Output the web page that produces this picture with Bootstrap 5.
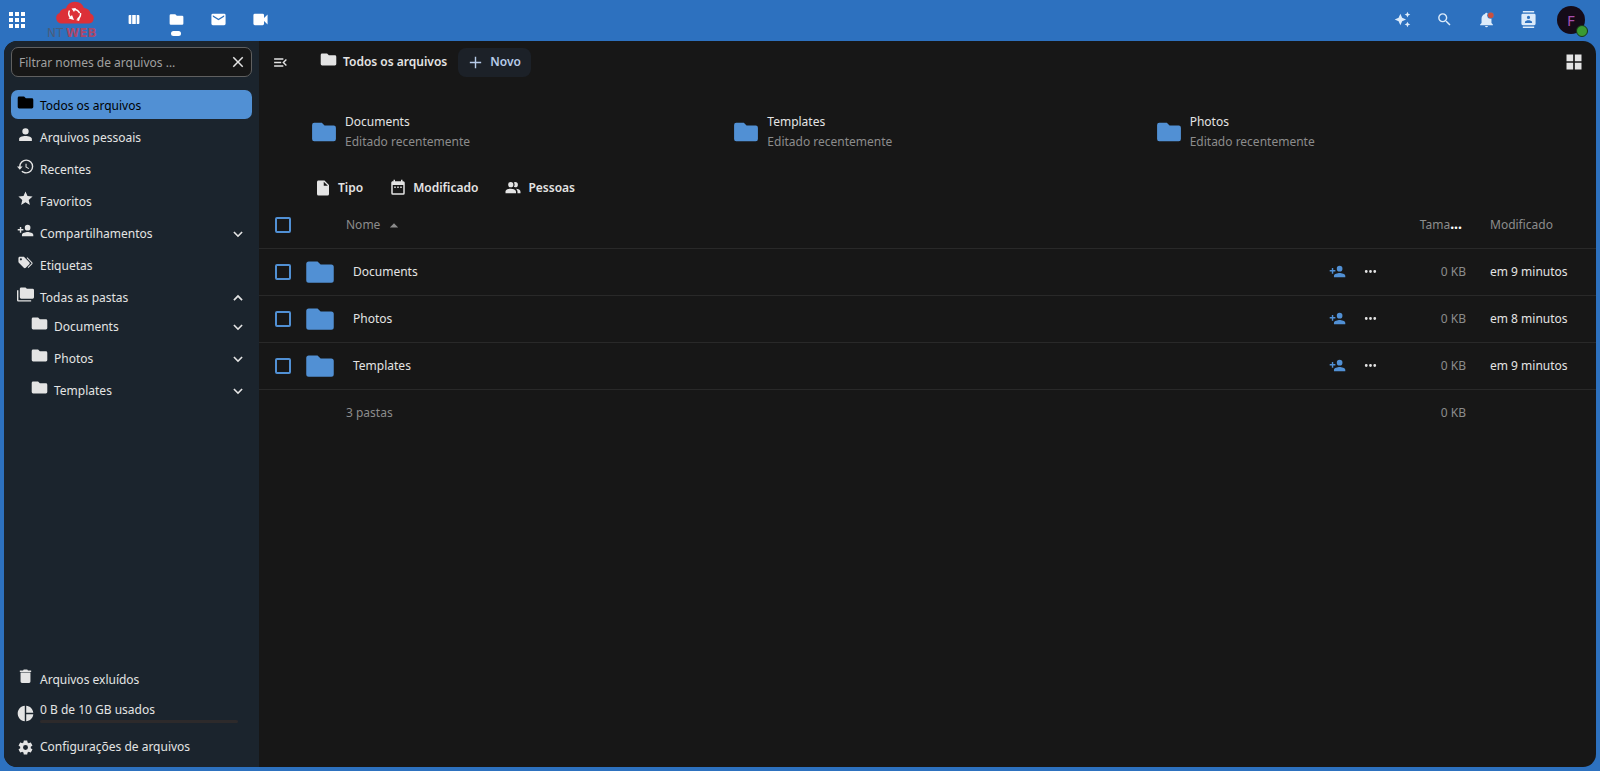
<!DOCTYPE html>
<html lang="pt-BR">
<head>
<meta charset="utf-8">
<meta name="viewport" content="width=device-width, initial-scale=1">
<title>Todos os arquivos</title>
<link href="https://cdn.jsdelivr.net/npm/bootstrap@5.3.0/dist/css/bootstrap.min.css" rel="stylesheet">
<style>
:root{--brand:#2d71bf;--accent:#5190d4;--side:#1b242d;--panel:#171717;--ink:#e4e4e4;--dim:#8c8c8c;--line:#292929}
body{background:var(--brand);color:var(--ink);font-family:"Noto Sans",sans-serif;font-size:12px;line-height:20px}
svg{fill:currentColor;display:block;flex:none}
a{color:inherit;text-decoration:none}
button{color:inherit;background:none;border:0;padding:0;font-weight:inherit}
.ic14{width:14px;height:14px}
.ic17{width:17px;height:17px}
.ic18{width:18px;height:18px}
.ic26{width:26px;height:26px}
.ic30{width:30px;height:30px}
.topbar{height:41px;padding:0 15px 2px 8px;color:#fff}
.brand-link{margin:0 9px 0 20px}
.brand-link text{font-family:"DejaVu Sans",sans-serif;font-size:12px}
.app-link,.tool{width:42px;height:39px;position:relative}
.app-link.current::after{content:"";position:absolute;bottom:3px;left:16px;width:10px;height:5px;border-radius:3px;background:#fff}
.tool{color:#dcebfa}
.avatar{width:28px;height:28px;border-radius:50%;background:#150b18;color:#a74fb0;font-size:15px;position:relative;margin-left:8px}
.status{position:absolute;right:-3px;bottom:-3px;width:12px;height:12px;border-radius:50%;background:#3a9a33;border:1px solid #17351a}
.shell{margin:0 4px 4px;border-radius:13px;overflow:hidden;background:var(--panel)}
.side{width:255px;background:var(--side);padding:6px 7px 6px}
.filter{border:1px solid #606060;border-radius:7px;background:var(--panel);height:30px;margin-bottom:13px;padding:0 4px 0 7px}
.filter input{background:none;border:0;outline:0;color:var(--ink);min-width:0;padding:2px 0 0}
.filter input::placeholder{color:#a0a0a0;opacity:1}
.entries{gap:3px}
.entry{height:29px;border-radius:7px;padding:1px 7px 0 6px}
.entry>.ic17{margin:0 6px 0 0}
.entry.raised{padding-top:3px}
.entry.raised>.ic17{margin-bottom:8px}
.entry.current{background:var(--accent);color:#000}
.sub{padding-left:14px}
.quota{height:3px;width:198px;border-radius:2px;background:#2d2a2b}
.quota-row{height:33px}
.quota-row>span{padding-bottom:3px}
.main-head{height:42px;padding:0 12px 0 13px}
.crumb{margin:0 11px 0 31px;font-weight:600}
.crumb svg{margin:0 6px 5px 0}
.new-btn{height:29px;padding:0 10px 0 9px;border-radius:8px;background:#1c2128;color:#b7cbe8;font-weight:600;gap:6px}
.recent{padding:29px 18px 0 52px}
.recent a{gap:8px}
.filters{padding:26px 0 0 55px;gap:26px;font-weight:600}
.filters button{gap:6px}
.dim{color:var(--dim)}
.acc{color:var(--accent)}
.files{width:100%;table-layout:fixed;margin-top:4px}
.files th{font-weight:400;color:var(--dim)}
.files th,.files td{height:47px;padding:0;border-bottom:1px solid var(--line)}
.files th{height:46px}
.files tfoot td{border:0;height:48px}
.files td a{gap:18px}
.files .form-check-input{width:16px;height:16px;margin:0 0 0 16px;border:2px solid var(--accent);border-radius:2px;background:none;float:none;display:block}
.c-check{width:46px}.c-act{width:59px}.c-size{width:102px}.c-time{width:106px}
.files .size{padding-right:24px;text-align:right}
.files th.size{padding-right:28px}
.files .size b{font-size:14px}
.files .name-pad{padding-left:41px}
</style>
<script src="https://cdn.jsdelivr.net/npm/bootstrap@5.3.0/dist/js/bootstrap.bundle.min.js"></script>
</head>
<body class="d-flex flex-column min-vh-100">
<svg class="d-none">
<symbol id="folder" viewBox="0 0 24 24"><path d="M10 3.500H3a2 2 0 0 0-2 2v13a2 2 0 0 0 2 2h18a2 2 0 0 0 2-2V8a2 2 0 0 0-2-2h-8.500z"/></symbol>
<symbol id="down" viewBox="0 0 24 24"><path d="M6 7.500 12 13.500l6-6L20 9.500l-8 8-8-8z"/></symbol>
<symbol id="up" viewBox="0 0 24 24"><path d="M6 16.500 12 10.500l6 6L20 14.500l-8-8-8 8z"/></symbol>
<symbol id="plususer" viewBox="0 0 24 24"><path d="M15,14C12.33,14 7,15.33 7,18V20H23V18C23,15.33 17.67,14 15,14M6,10V7H4V10H1V12H4V15H6V12H9V10M15,12A4,4 0 0,0 19,8A4,4 0 0,0 15,4A4,4 0 0,0 11,8A4,4 0 0,0 15,12Z"/></symbol>
<symbol id="dots" viewBox="0 0 24 24"><path d="M16,12A2,2 0 0,1 18,10A2,2 0 0,1 20,12A2,2 0 0,1 18,14A2,2 0 0,1 16,12M10,12A2,2 0 0,1 12,10A2,2 0 0,1 14,12A2,2 0 0,1 12,14A2,2 0 0,1 10,12M4,12A2,2 0 0,1 6,10A2,2 0 0,1 8,12A2,2 0 0,1 6,14A2,2 0 0,1 4,12Z"/></symbol>
</svg>

<header class="topbar d-flex align-items-center">
  <button aria-label="Aplicativos"><svg class="ic18" viewBox="0 0 18 18"><path d="M1 1h4v4H1zM7 1h4v4H7zM13 1h4v4h-4zM1 7h4v4H1zM7 7h4v4H7zM13 7h4v4h-4zM1 13h4v4H1zM7 13h4v4H7zM13 13h4v4h-4z"/></svg></button>
  <a class="brand-link" href="#" aria-label="NTWEB">
    <svg width="58" height="39" viewBox="0 0 58 39">
      <path fill="#dc3038" d="M15 23.500a5.500 5.500 0 0 1-1.500-10.500A6.500 6.500 0 0 1 20 8.500a9.500 9.500 0 0 1 18-.5 6.500 6.500 0 0 1 6.500 5.500A5.200 5.200 0 0 1 43 23.500z"/>
      <path fill="none" stroke="#fff" stroke-width="1.500" d="M23.500 10.500a6 6 0 0 0 1 7M28 9.500a6 6 0 0 1 5.500 3.500M34.500 13a6 6 0 0 1-3 6"/>
      <path fill="#fff" d="m22.500 18.500 5.500 1.500-2-5zM30 8l-4.500.5 2.500 3.500zM34 18l-4 2 3 1z"/>
      <text x="1" y="37" fill="#4b5d7d">NT</text><text x="20" y="37" fill="#a9486b" font-weight="700">WEB</text>
    </svg></a>
  <nav class="d-flex" aria-label="Aplicativos">
    <a class="app-link d-flex align-items-center justify-content-center" href="#" aria-label="Painel"><svg width="12" height="9" viewBox="0 0 12 10"><path d="M0 1q0-1 1-1h2v10H1q-1 0-1-1zM4 0h4v10H4zM9 0h2q1 0 1 1v8q0 1-1 1H9z"/></svg></a>
    <a class="app-link current d-flex align-items-center justify-content-center" href="#" aria-label="Arquivos"><svg width="15" height="15"><use href="#folder"/></svg></a>
    <a class="app-link d-flex align-items-center justify-content-center" href="#" aria-label="E-mail"><svg class="ic17" viewBox="0 0 24 24"><path d="m20 8-8 5-8-5V6l8 5 8-5m0-2H4a2 2 0 0 0-2 2v12a2 2 0 0 0 2 2h16a2 2 0 0 0 2-2V6a2 2 0 0 0-2-2z"/></svg></a>
    <a class="app-link d-flex align-items-center justify-content-center" href="#" aria-label="Conversas"><svg class="ic17" viewBox="0 0 24 24"><path d="M4 4h11a2 2 0 0 1 2 2v4l5-5v14l-5-5v4a2 2 0 0 1-2 2H4a2 2 0 0 1-2-2V6a2 2 0 0 1 2-2z"/></svg></a>
  </nav>
  <div class="d-flex align-items-center ms-auto">
    <button class="tool d-flex align-items-center justify-content-center" aria-label="Assistente"><svg class="ic17" viewBox="0 0 24 24"><path d="M19,1L17.74,3.75L15,5L17.74,6.26L19,9L20.25,6.26L23,5L20.25,3.75M9,4L6.500,9.500L1,12L6.500,14.500L9,20L11.500,14.500L17,12L11.500,9.500M19,15L17.74,17.74L15,19L17.74,20.25L19,23L20.25,20.25L23,19L20.25,17.74"/></svg></button>
    <button class="tool d-flex align-items-center justify-content-center" aria-label="Pesquisar"><svg class="ic17" viewBox="0 0 24 24"><path d="M9.500,3A6.500,6.500 0 0,1 16,9.500C16,11.11 15.41,12.59 14.44,13.73L14.71,14H15.500L20.500,19L19,20.500L14,15.500V14.71L13.73,14.44C12.59,15.41 11.11,16 9.500,16A6.500,6.500 0 0,1 3,9.500A6.500,6.500 0 0,1 9.500,3M9.500,5C7,5 5,7 5,9.500C5,12 7,14 9.500,14C12,14 14,12 14,9.500C14,7 12,5 9.500,5Z"/></svg></button>
    <button class="tool d-flex align-items-center justify-content-center" aria-label="Notificações"><svg class="ic17" viewBox="0 0 24 24"><path d="M21 19v1H3v-1l2-2v-6c0-3.300 2-6 5-6.700a2 2 0 0 1 4 0c3 .7 5 3.400 5 6.700v6zM14 21a2 2 0 0 1-4 0"/><circle cx="18" cy="6" r="5" fill="#3c78bd"/><circle cx="18" cy="6" r="4" fill="#c9503f"/></svg></button>
    <button class="tool d-flex align-items-center justify-content-center" aria-label="Contatos"><svg class="ic17" viewBox="0 0 24 24"><path d="M20,0H4V2H20V0M4,24H20V22H4V24M20,4H4A2,2 0 0,0 2,6V18A2,2 0 0,0 4,20H20A2,2 0 0,0 22,18V6A2,2 0 0,0 20,4M12,6.75A2.25,2.25 0 0,1 14.25,9A2.25,2.25 0 0,1 12,11.25A2.25,2.25 0 0,1 9.75,9A2.25,2.25 0 0,1 12,6.75M17,17H7V15.500C7,13.83 10.33,13 12,13C13.67,13 17,13.83 17,15.500V17Z"/></svg></button>
    <button class="avatar d-flex align-items-center justify-content-center" aria-label="Conta">F<span class="status"></span></button>
  </div>
</header>

<div class="shell d-flex flex-fill">
  <nav class="side d-flex flex-column flex-shrink-0" aria-label="Arquivos">
    <div class="filter d-flex align-items-center">
      <input class="flex-fill" type="text" placeholder="Filtrar nomes de arquivos …" aria-label="Filtrar nomes de arquivos">
      <button aria-label="Limpar"><svg class="ic18" viewBox="0 0 24 24"><path d="M19 6.410 17.590 5 12 10.590 6.410 5 5 6.410 10.590 12 5 17.590 6.410 19 12 13.410 17.590 19 19 17.590 13.410 12z"/></svg></button>
    </div>
    <div class="entries d-flex flex-column">
      <a class="entry raised current d-flex align-items-center" href="#"><svg class="ic17"><use href="#folder"/></svg>Todos os arquivos</a>
      <a class="entry raised d-flex align-items-center" href="#"><svg class="ic17" viewBox="0 0 24 24"><path d="M12,3A4.500,4.500 0 0,1 16.500,7.500A4.500,4.500 0 0,1 12,12A4.500,4.500 0 0,1 7.500,7.500A4.500,4.500 0 0,1 12,3M12,14C17,14 21,15.790 21,18V21H3V18C3,15.790 7,14 12,14Z"/></svg>Arquivos pessoais</a>
      <a class="entry raised d-flex align-items-center" href="#"><svg class="ic17" viewBox="0 0 24 24"><path d="M13.500,8H12V13L16.280,15.540L17,14.330L13.500,12.250V8M13,2A10,10 0 0,0 3,12H0L4,16.500L8,12H5A8,8 0 0,1 13,4A8,8 0 0,1 21,12A8,8 0 0,1 13,20C11,20 9,19.210 7.560,17.940L6.140,19.360C8,21 10.500,22 13,22A10,10 0 0,0 23,12A10,10 0 0,0 13,2"/></svg>Recentes</a>
      <a class="entry raised d-flex align-items-center" href="#"><svg class="ic17" viewBox="0 0 24 24"><path d="M12,17.270L18.180,21L16.540,13.970L22,9.240L14.810,8.620L12,2L9.190,8.620L2,9.240L7.450,13.970L5.820,21L12,17.270Z"/></svg>Favoritos</a>
      <a class="entry raised d-flex align-items-center" href="#"><svg class="ic17"><use href="#plususer"/></svg>Compartilhamentos<svg class="ic14 ms-auto"><use href="#down"/></svg></a>
      <a class="entry raised d-flex align-items-center" href="#"><svg class="ic17" viewBox="0 0 24 24"><path d="M5.500,9A1.500,1.500 0 0,0 7,7.500A1.500,1.500 0 0,0 5.500,6A1.500,1.500 0 0,0 4,7.500A1.500,1.500 0 0,0 5.500,9M17.410,11.580C17.770,11.940 18,12.440 18,13C18,13.550 17.780,14.050 17.410,14.410L12.410,19.410C12.050,19.770 11.550,20 11,20C10.450,20 9.950,19.780 9.580,19.410L2.590,12.420C2.220,12.050 2,11.550 2,11V6C2,4.890 2.890,4 4,4H9C9.550,4 10.050,4.220 10.410,4.580L17.410,11.580M13.540,5.710L14.540,4.710L21.410,11.580C21.780,11.940 22,12.450 22,13C22,13.550 21.780,14.050 21.420,14.410L16.040,19.790L15.040,18.790L20.750,13L13.540,5.710Z"/></svg>Etiquetas</a>
      <div>
        <a class="entry raised d-flex align-items-center" href="#"><svg class="ic17" viewBox="0 0 24 24"><path d="M22,4H14L12,2H6A2,2 0 0,0 4,4V16A2,2 0 0,0 6,18H22A2,2 0 0,0 24,16V6A2,2 0 0,0 22,4M2,6H0V20A2,2 0 0,0 2,22H20V20H2V6Z"/></svg>Todas as pastas<svg class="ic14 ms-auto"><use href="#up"/></svg></a>
        <div class="sub entries d-flex flex-column">
          <a class="entry raised d-flex align-items-center" href="#"><svg class="ic17"><use href="#folder"/></svg>Documents<svg class="ic14 ms-auto"><use href="#down"/></svg></a>
          <a class="entry raised d-flex align-items-center" href="#"><svg class="ic17"><use href="#folder"/></svg>Photos<svg class="ic14 ms-auto"><use href="#down"/></svg></a>
          <a class="entry raised d-flex align-items-center" href="#"><svg class="ic17"><use href="#folder"/></svg>Templates<svg class="ic14 ms-auto"><use href="#down"/></svg></a>
        </div>
      </div>
    </div>
    <div class="entries d-flex flex-column mt-auto">
      <a class="entry raised d-flex align-items-center" href="#"><svg class="ic17" viewBox="0 0 24 24"><path d="M20,3.500H15.500L14.500,2H9.500L8.500,3.500H4V5.500H20M5,19A2,2 0 0,0 7,21H17A2,2 0 0,0 19,19V6.500H5V19Z"/></svg>Arquivos exluídos</a>
      <a class="entry quota-row d-flex align-items-center" href="#"><svg class="ic17" viewBox="0 0 24 24"><path d="M11,1V23C5,22.500 1,17.500 1,12C1,6.500 5,1.500 11,1M13,1V11H23C22.500,5.500 18.500,1.500 13,1M13,13V23C18.500,22.500 22.500,18.500 23,13H13Z"/></svg><span>0 B de 10 GB usados<span class="quota d-block"></span></span></a>
      <button class="entry d-flex align-items-center"><svg class="ic17" viewBox="0 0 24 24"><path d="M12,15.500A3.500,3.500 0 0,1 8.500,12A3.500,3.500 0 0,1 12,8.500A3.500,3.500 0 0,1 15.500,12A3.500,3.500 0 0,1 12,15.500M19.430,12.970C19.470,12.650 19.500,12.330 19.500,12C19.500,11.670 19.470,11.340 19.430,11L21.540,9.370C21.730,9.220 21.780,8.950 21.660,8.730L19.660,5.270C19.540,5.050 19.270,4.960 19.050,5.050L16.560,6.050C16.040,5.660 15.500,5.320 14.870,5.070L14.500,2.420C14.460,2.180 14.250,2 14,2H10C9.750,2 9.540,2.180 9.500,2.420L9.130,5.070C8.500,5.320 7.960,5.660 7.440,6.050L4.950,5.050C4.730,4.960 4.460,5.050 4.340,5.270L2.340,8.730C2.210,8.950 2.270,9.220 2.460,9.370L4.570,11C4.530,11.340 4.500,11.670 4.500,12C4.500,12.330 4.530,12.650 4.570,12.970L2.460,14.630C2.270,14.780 2.210,15.050 2.340,15.270L4.340,18.730C4.460,18.950 4.730,19.030 4.950,18.950L7.440,17.940C7.960,18.340 8.500,18.680 9.130,18.930L9.500,21.580C9.540,21.820 9.750,22 10,22H14C14.250,22 14.460,21.820 14.500,21.580L14.870,18.930C15.500,18.670 16.040,18.340 16.560,17.940L19.050,18.950C19.270,19.030 19.540,18.950 19.660,18.730L21.660,15.270C21.780,15.050 21.730,14.780 21.540,14.630L19.430,12.970Z"/></svg>Configurações de arquivos</button>
    </div>
  </nav>

  <main class="flex-fill">
    <div class="main-head d-flex align-items-center">
      <button aria-label="Fechar navegação"><svg class="ic17" viewBox="0 0 24 24"><path d="M21,15.610L19.590,17L14.580,12L19.590,7L21,8.390L17.440,12L21,15.610M3,6H16V8H3V6M3,13V11H13V13H3M3,18V16H16V18H3Z"/></svg></button>
      <a class="crumb d-flex align-items-center" href="#"><svg class="ic17"><use href="#folder"/></svg>Todos os arquivos</a>
      <button class="new-btn d-flex align-items-center"><svg class="ic17" viewBox="0 0 24 24"><path d="M20 13h-7v7h-2v-7H4v-2h7V4h2v7h7z"/></svg>Novo</button>
      <button class="ms-auto" aria-label="Exibir em grade"><svg width="20" height="20" viewBox="0 0 24 24"><path d="M3,11H11V3H3M3,21H11V13H3M13,21H21V13H13M13,3V11H21V3"/></svg></button>
    </div>
    <div class="recent row gx-0">
      <div class="col-4"><a class="d-flex align-items-center" href="#"><svg class="ic26 acc"><use href="#folder"/></svg><span>Documents<br><span class="dim">Editado recentemente</span></span></a></div>
      <div class="col-4"><a class="d-flex align-items-center" href="#"><svg class="ic26 acc"><use href="#folder"/></svg><span>Templates<br><span class="dim">Editado recentemente</span></span></a></div>
      <div class="col-4"><a class="d-flex align-items-center" href="#"><svg class="ic26 acc"><use href="#folder"/></svg><span>Photos<br><span class="dim">Editado recentemente</span></span></a></div>
    </div>
    <div class="filters d-flex">
      <button class="d-flex align-items-center"><svg class="ic18" viewBox="0 0 24 24"><path d="M13,9V3.500L18.500,9M6,2C4.890,2 4,2.890 4,4V20A2,2 0 0,0 6,22H18A2,2 0 0,0 20,20V8L14,2H6Z"/></svg>Tipo</button>
      <button class="d-flex align-items-center"><svg class="ic18" viewBox="0 0 24 24"><path d="M9,10H7V12H9V10M13,10H11V12H13V10M17,10H15V12H17V10M19,3H18V1H16V3H8V1H6V3H5C3.890,3 3,3.900 3,5V19A2,2 0 0,0 5,21H19A2,2 0 0,0 21,19V5A2,2 0 0,0 19,3M19,19H5V8H19V19Z"/></svg>Modificado</button>
      <button class="d-flex align-items-center"><svg class="ic18" viewBox="0 0 24 24"><path d="M16 17V19H2V17S2 13 9 13 16 17 16 17M12.500 7.500A3.500 3.500 0 1 0 9 11A3.500 3.500 0 0 0 12.500 7.500M15.940 13A5.320 5.320 0 0 1 18 17V19H22V17S22 13.370 15.940 13M15 4A3.390 3.390 0 0 0 13.070 4.590A5 5 0 0 1 13.070 10.410A3.390 3.390 0 0 0 15 11A3.500 3.500 0 0 0 15 4Z"/></svg>Pessoas</button>
    </div>
    <table class="files">
      <colgroup><col class="c-check"><col><col class="c-act"><col class="c-size"><col class="c-time"></colgroup>
      <thead><tr><th><input class="form-check-input" type="checkbox" aria-label="Selecionar tudo"></th><th class="name-pad"><button class="d-flex align-items-center gap-1">Nome<svg width="20" height="20" viewBox="0 0 24 24"><path d="m7 15 5-5 5 5z"/></svg></button></th><th></th><th class="size"><button>Tama<b class="text-white">...</b></button></th><th>Modificado</th></tr></thead>
      <tbody>
        <tr><td><input class="form-check-input" type="checkbox" aria-label="Documents"></td><td><a class="d-flex align-items-center" href="#"><svg class="ic30 acc"><use href="#folder"/></svg>Documents</a></td><td><div class="d-flex gap-3"><button class="acc" aria-label="Compartilhar"><svg class="ic17"><use href="#plususer"/></svg></button><button aria-label="Ações"><svg class="ic17"><use href="#dots"/></svg></button></div></td><td class="size dim">0 KB</td><td>em 9 minutos</td></tr>
        <tr><td><input class="form-check-input" type="checkbox" aria-label="Photos"></td><td><a class="d-flex align-items-center" href="#"><svg class="ic30 acc"><use href="#folder"/></svg>Photos</a></td><td><div class="d-flex gap-3"><button class="acc" aria-label="Compartilhar"><svg class="ic17"><use href="#plususer"/></svg></button><button aria-label="Ações"><svg class="ic17"><use href="#dots"/></svg></button></div></td><td class="size dim">0 KB</td><td>em 8 minutos</td></tr>
        <tr><td><input class="form-check-input" type="checkbox" aria-label="Templates"></td><td><a class="d-flex align-items-center" href="#"><svg class="ic30 acc"><use href="#folder"/></svg>Templates</a></td><td><div class="d-flex gap-3"><button class="acc" aria-label="Compartilhar"><svg class="ic17"><use href="#plususer"/></svg></button><button aria-label="Ações"><svg class="ic17"><use href="#dots"/></svg></button></div></td><td class="size dim">0 KB</td><td>em 9 minutos</td></tr>
      </tbody>
      <tfoot><tr class="dim"><td></td><td class="name-pad">3 pastas</td><td></td><td class="size">0 KB</td><td></td></tr></tfoot>
    </table>
  </main>
</div>
</body>
</html>
